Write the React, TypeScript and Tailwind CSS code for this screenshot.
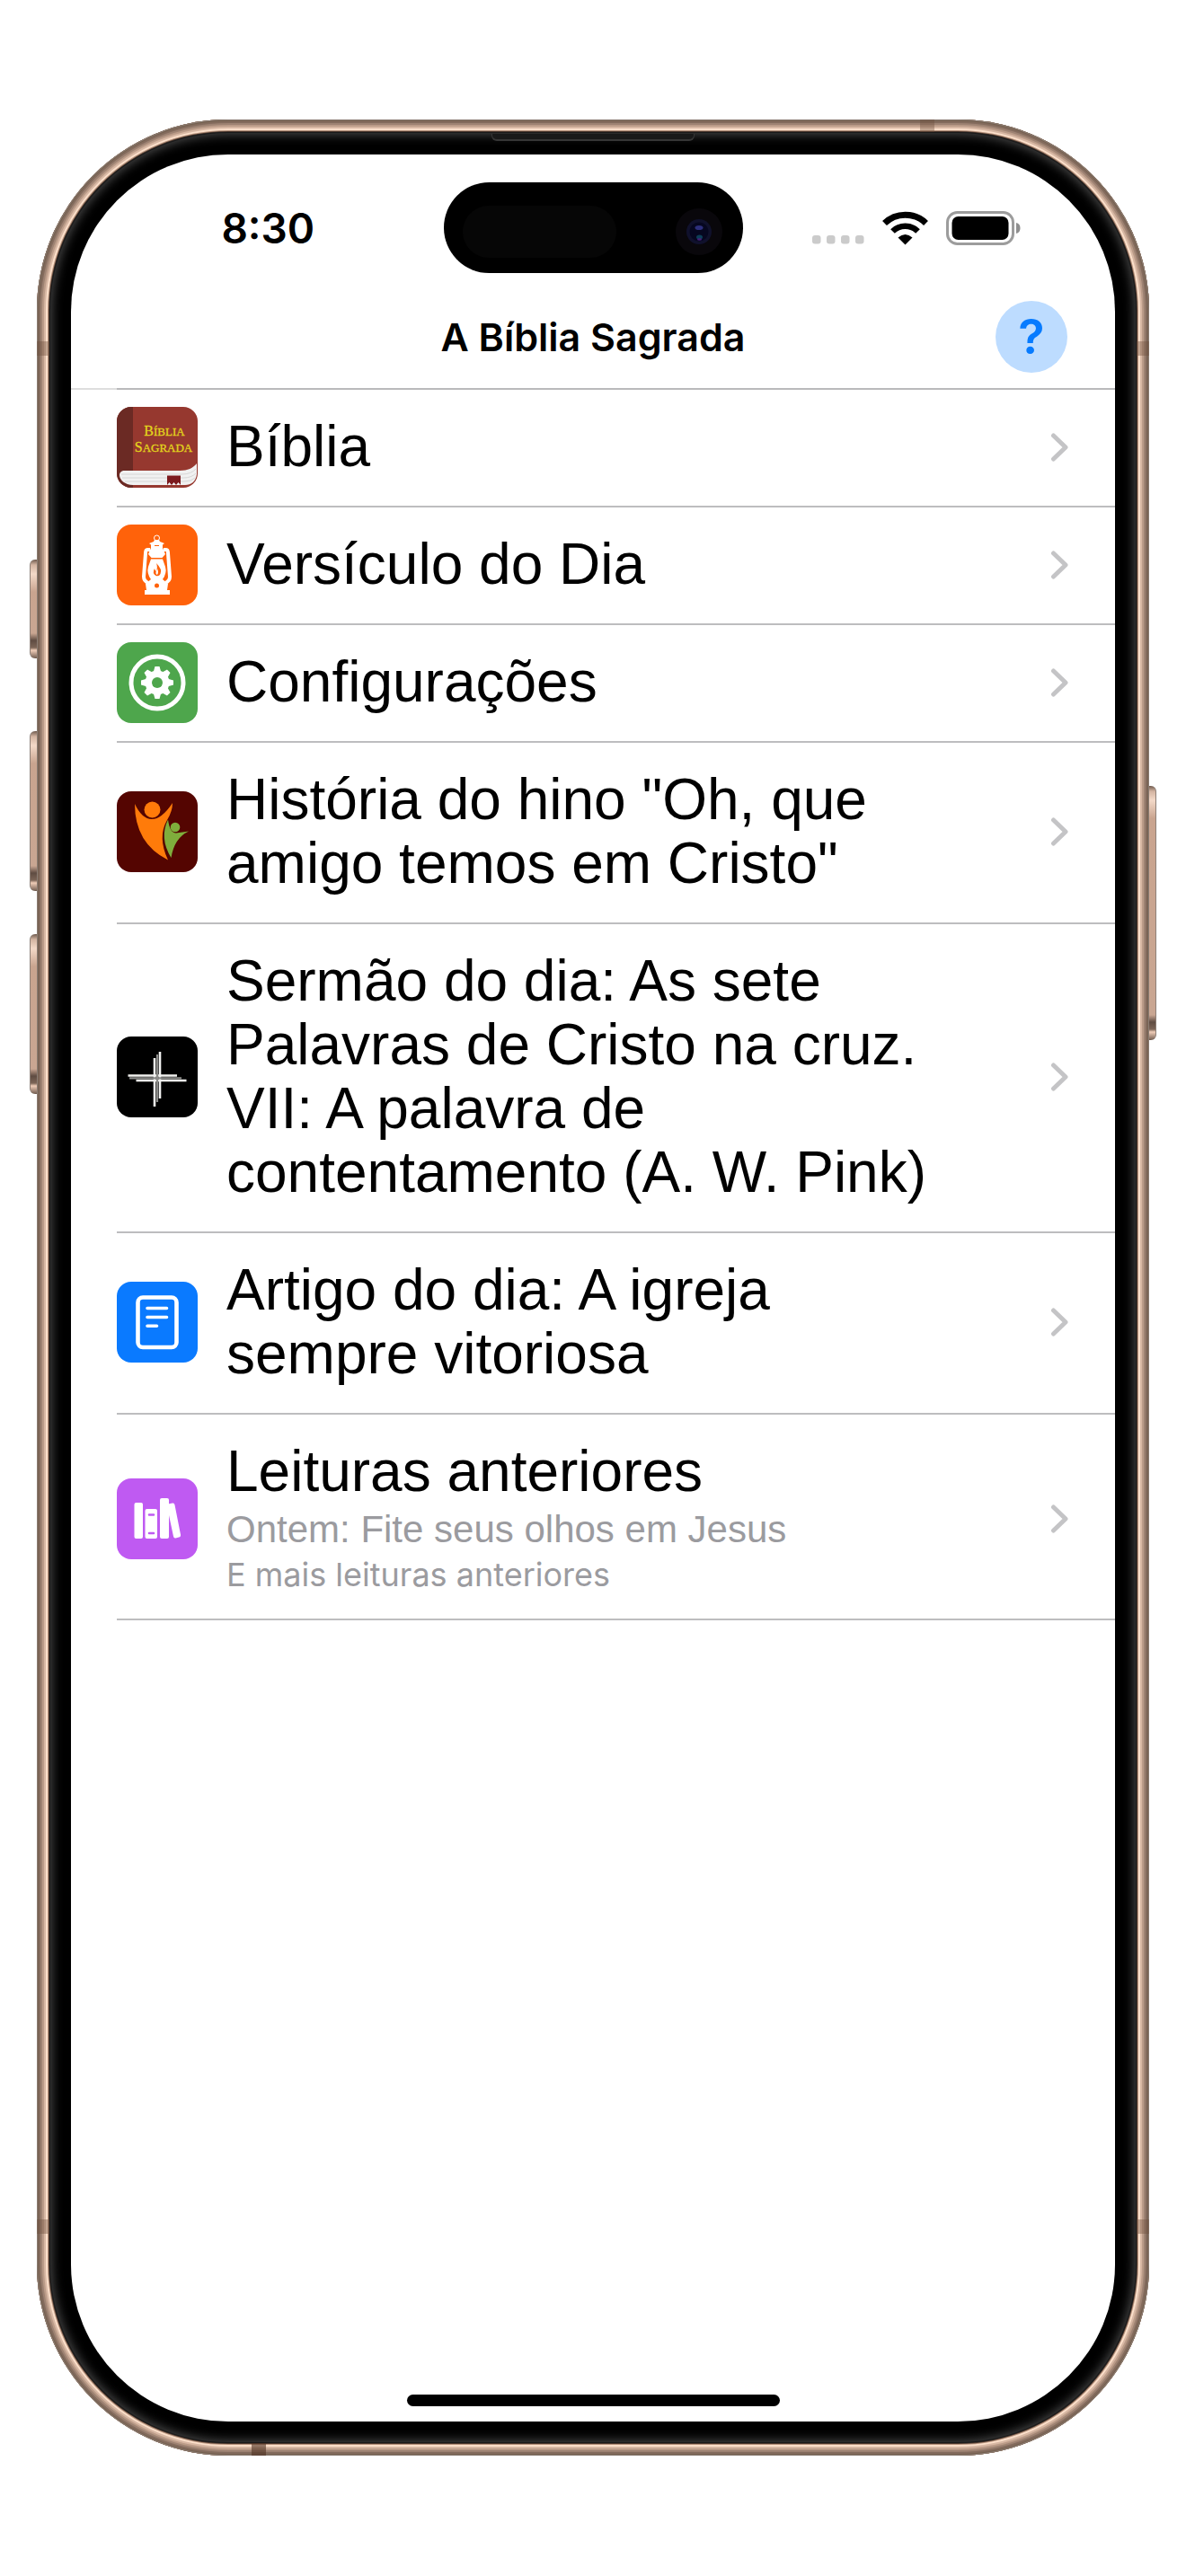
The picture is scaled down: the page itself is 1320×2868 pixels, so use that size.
import type { ReactNode } from "react";

interface IMenuItem {
  title: string;
  icon: ReactNode;
  subtitle?: string;
  note?: string;
}

function BibleIcon() {
  return (
    <svg viewBox="0 0 90 90" className="size-full">
      <rect width="90" height="90" fill="#96382f" />
      <rect width="18" height="90" fill="#6b2a24" />
      <g fill="#e3d51c" stroke="#e3d51c" strokeWidth="0.300" textAnchor="middle" fontFamily="Liberation Serif, serif" fontSize="16">
        <text x="53" y="32">
          B<tspan fontSize="13">ÍBLIA</tspan>
        </text>
        <text x="52" y="50">
          S<tspan fontSize="13">AGRADA</tspan>
        </text>
      </g>
      <path d="M9 71H70C79 71 85 68 89 63V75C88 83 83 87 76 87H18C9 87 3 81 3 76C3 73 5 71 9 71Z" fill="#f1f1f1" />
      <path d="M5 75H72Q83 75 88 69M6 79H74Q83 79 88 74M9 83H75Q83 83 87 79" fill="none" stroke="#d6d6d6" strokeWidth="1" />
      <path d="M56 76.500H71V87L68.500 84L66 87L63.500 84L61 87L58.500 84L56 87Z" fill="#7c1a1e" />
    </svg>
  );
}

function LanternIcon() {
  return (
    <svg viewBox="0 0 90 90" className="size-full">
      <rect width="90" height="90" fill="#ff620a" />
      <circle cx="44.500" cy="15" r="3" fill="none" stroke="#fff" strokeWidth="1" />
      <path d="M42 17H47L48 19L53 21L51 22.500V26L54 33L50.500 37H38.500L35 33L38 26V22.500L36 21L41 19Z" fill="#fff" />
      <path d="M42 23.500H47" stroke="#ff620a" strokeWidth="1" />
      <path d="M37 28H34Q32 28 32 32L30 58Q30 63 35 65M52 28H55Q57 28 57 32L59 58Q59 63 54 65" fill="none" stroke="#fff" strokeWidth="4" />
      <path d="M38 38.500H51L54 47Q56 54 51 61L57 66L56 73H59V78H31V73H33L32 66L38 61Q33 54 35 47Z" fill="#fff" />
      <path d="M44 43Q51 50 48.500 55Q47 58 43.500 57Q39 54 42 49Q42.500 51 43.500 52Q46 48 44 43Z" fill="#ff620a" />
      <path d="M45 49Q47 53 45 56Q42 55 45 49Z" fill="#fff" />
      <circle cx="44.500" cy="68" r="2.500" fill="#ff620a" />
    </svg>
  );
}

function GearIcon() {
  return (
    <svg viewBox="0 0 90 90" className="size-full">
      <rect width="90" height="90" fill="#4ea64c" />
      <circle cx="45" cy="45" r="29" fill="none" stroke="#fff" strokeWidth="5" />
      <g fill="#fff">
        <circle cx="45" cy="45" r="13.500" />
        {[0, 45, 90, 135].map((angle) => (
          <path key={angle} d="M42.500 27H47.500L49.500 34V56L47.500 63H42.500L40.500 56V34Z" transform={`rotate(${angle} 45 45)`} />
        ))}
      </g>
      <circle cx="45" cy="45" r="6" fill="#4ea64c" />
    </svg>
  );
}

function FiguresIcon() {
  return (
    <svg viewBox="0 0 90 90" className="size-full">
      <rect width="90" height="90" fill="#540501" />
      <g fill="#ff7b0a">
        <circle cx="39.500" cy="20.500" r="9" />
        <path d="M20 14Q28 31 39 31Q50 31 62 13Q62 22 56 32Q45 51 57 76.500Q20 58 20 14Z" />
      </g>
      <g fill="#7fae3c">
        <circle cx="65" cy="40" r="5.300" />
        <path d="M57 31.500Q59 46.500 66 46.500L80 44.500Q64 52 60.500 74Q47 52 57 31.500Z" />
      </g>
    </svg>
  );
}

function CrossIcon() {
  return (
    <svg viewBox="0 0 90 90" className="size-full">
      <rect width="90" height="90" fill="#000" />
      <path d="M12.500 43.500H67M21.500 49H77.500M42 24V78M48 17V69" stroke="#f2f2f0" strokeWidth="2.600" />
      <path d="M14 46.300H72M45 20V73" stroke="#8b8b89" strokeWidth="2.200" />
    </svg>
  );
}

function ArticleIcon() {
  return (
    <svg viewBox="0 0 90 90" className="size-full">
      <rect width="90" height="90" fill="#0a7aff" />
      <rect x="23.500" y="17.500" width="43" height="55.500" rx="5.500" fill="none" stroke="#fff" strokeWidth="4.600" />
      <path d="M34 29.500H55.500M34 39.500H55.500M34 49.300H44.500" stroke="#fff" strokeWidth="3.600" strokeLinecap="round" />
    </svg>
  );
}

function BooksIcon() {
  return (
    <svg viewBox="0 0 90 90" className="size-full">
      <rect width="90" height="90" fill="#bf5af2" />
      <g fill="#fff">
        <rect x="19.500" y="27" width="9.500" height="40" rx="2" />
        <rect x="31.500" y="34" width="13.500" height="33" rx="2" />
        <rect x="48" y="22" width="10" height="45" rx="2" />
        <path d="M57 28.500L62 27.500Q64 27 64.500 29.500L71 62.500Q71.500 65 69 65.500L65.500 66.500Q63.500 67 63 64.500L58 41Z" />
      </g>
      <path d="M36 40.500H41M36 61H41" stroke="#bf5af2" strokeWidth="2.600" strokeLinecap="round" />
    </svg>
  );
}

const items: IMenuItem[] = [
  { title: "Bíblia", icon: <BibleIcon /> },
  { title: "Versículo do Dia", icon: <LanternIcon /> },
  { title: "Configurações", icon: <GearIcon /> },
  { title: 'História do hino "Oh, que amigo temos em Cristo"', icon: <FiguresIcon /> },
  {
    title: "Sermão do dia: As sete Palavras de Cristo na cruz. VII: A palavra de contentamento (A. W. Pink)",
    icon: <CrossIcon />,
  },
  { title: "Artigo do dia: A igreja sempre vitoriosa", icon: <ArticleIcon /> },
  {
    title: "Leituras anteriores",
    icon: <BooksIcon />,
    subtitle: "Ontem: Fite seus olhos em Jesus",
    note: "E mais leituras anteriores",
  },
];

function MenuRow(props: { item: IMenuItem }) {
  const { item } = props;
  return (
    <li className="border-b-2 border-[#bdbdbf]">
      <a href="#" className={item.subtitle ? "flex items-center pt-7 pb-6 pr-[52px]" : "flex items-center pt-7 pb-[30px] pr-[52px]"}>
        {/* the icon is taller than one line of text, so it must not stretch the row */}
        <span className="-my-3 mr-8 size-[90px] shrink-0 overflow-hidden rounded-2xl">{item.icon}</span>
        <span className="mr-[124px] flex-1">
          <span className="block text-[64px] leading-[71px] text-black">{item.title}</span>
          {item.subtitle && (
            <span className="mt-1 block text-[42px] leading-[50px] text-[#9b9b9f]">{item.subtitle}</span>
          )}
          {item.note && (
            <span className="block font-['Inter',sans-serif] text-[36px] leading-[50px] text-[#9b9b9f]">{item.note}</span>
          )}
        </span>
        <svg viewBox="0 0 20 32" className="h-8 w-5 shrink-0" fill="none" stroke="#c4c4c6" strokeWidth="5" strokeLinecap="round" strokeLinejoin="round">
          <path d="M3.500 3L17 16L3.500 29" />
        </svg>
      </a>
    </li>
  );
}

function DynamicIsland() {
  return (
    <div className="flex h-[101px] items-center justify-between rounded-full bg-black pt-2 pr-[23px] pl-[21px]">
      <span className="h-[58px] w-[171px] rounded-full bg-[#060606]" />
      <svg viewBox="0 0 52 52" className="size-[52px]">
        <circle cx="26" cy="26" r="26" fill="#09070b" />
        <circle cx="26" cy="26" r="14" fill="#10112c" />
        <circle cx="26" cy="26" r="10.500" fill="#060720" />
        <ellipse cx="26" cy="21.500" rx="4.500" ry="2.500" fill="#2d2f7c" />
        <ellipse cx="26.500" cy="32" rx="3.500" ry="2.500" fill="#0d3f58" />
        <ellipse cx="26.500" cy="34.500" rx="2.500" ry="1.200" fill="#4a1f7a" />
      </svg>
    </div>
  );
}

function StatusBar() {
  return (
    <div className="grid h-[163px] grid-cols-[1fr_333px_1fr] items-center">
      <span className="pl-6 text-center font-['Inter',sans-serif] text-[46px] leading-[56px] font-semibold text-black">8:30</span>
      <DynamicIsland />
      <div className="flex items-center justify-end pr-[104px]">
        <svg viewBox="0 0 58 38" className="mr-5 h-[38px] w-[58px]" fill="#cbcbcb">
          {[0, 16, 32, 48].map((x) => (
            <rect key={x} x={x} y="27" width="9.500" height="9.500" rx="3" />
          ))}
        </svg>
        <svg viewBox="0 0 51 38" className="mr-5 h-[38px] w-[51px]" fill="none" stroke="#000">
          <path d="M2.500 13.500A33 33 0 0 1 48.500 13.500" strokeWidth="7" />
          <path d="M11.500 22.500A20 20 0 0 1 39.500 22.500" strokeWidth="6.600" />
          <path d="M25.500 37.500L17.500 29.500Q25.500 22.500 33.500 29.500Z" fill="#000" stroke="none" />
        </svg>
        <svg viewBox="0 0 84 38" className="h-[38px] w-[84px]">
          <rect x="1.500" y="1.500" width="73" height="35" rx="11" fill="none" stroke="#9c9c9c" strokeWidth="3" />
          <rect x="6.500" y="6" width="63" height="26" rx="7" fill="#000" />
          <path d="M78 13Q82.500 14 82.500 19Q82.500 24 78 25Z" fill="#8e8e8e" />
        </svg>
      </div>
    </div>
  );
}

function NavBar() {
  return (
    <header>
      <div className="grid grid-cols-[80px_1fr_80px] items-center px-[53px] pb-[17px]">
        <h1 className="col-start-2 text-center font-['Inter',sans-serif] text-[43px] leading-[52px] font-semibold text-black">
          A Bíblia Sagrada
        </h1>
        <button
          type="button"
          aria-label="Ajuda"
          className="flex size-20 items-center justify-center rounded-full bg-[#bddcff] font-['Inter',sans-serif] text-[54px] leading-[60px] font-semibold text-[#077bff]"
        >
          ?
        </button>
      </div>
      <div className="flex">
        <div className="w-[51px] border-b-2 border-[#dedede]" />
        <div className="flex-1 border-b-2 border-[#b9b9bb]" />
      </div>
    </header>
  );
}

const sideButton =
  "absolute rounded-l-md border-l border-[#8d8078] bg-[linear-gradient(to_bottom,#6f5a4e_0,#d3b4a1_6px,#f3d9c8_16px,#c9a48f_36px,#c9a692_calc(100%-28px),#5f4c42_calc(100%-20px),#7c6557_calc(100%-12px),#f0cdb8_calc(100%-9px),#6f5a4e_100%)] w-2";

function App() {
  return (
    <div className="flex min-h-screen flex-col bg-white px-[41px] pt-[133px] pb-[134px] font-['Liberation_Sans',Arial,sans-serif]">
      <div className="relative flex flex-1 flex-col rounded-[213px] bg-[#4a372d] p-[14px] shadow-[inset_0_0_0_1px_#8d7e75,inset_0_0_0_2px_#74604f,inset_0_0_0_4px_#836b5d,inset_0_0_0_6px_#9d8272,inset_0_0_0_8px_#ba9b88,inset_0_0_0_10px_#d8b8a4,inset_0_0_0_12px_#fbdfca,inset_0_0_0_13px_#b8947e]">
        {/* hardware buttons */}
        <span className={`${sideButton} top-[490px] -left-2 h-[110px]`} />
        <span className={`${sideButton} top-[681px] -left-2 h-[178px]`} />
        <span className={`${sideButton} top-[907px] -left-2 h-[178px]`} />
        <span className={`${sideButton} top-[742px] -right-2 h-[283px] -scale-x-100`} />

        {/* antenna bands */}
        <span className="absolute top-[247px] left-0 h-4 w-[14px] bg-[#6f4e3d]/40" />
        <span className="absolute top-[247px] right-0 h-4 w-[14px] bg-[#6f4e3d]/40" />
        <span className="absolute bottom-[247px] left-0 h-4 w-[14px] bg-[#6f4e3d]/40" />
        <span className="absolute right-0 bottom-[247px] h-4 w-[14px] bg-[#6f4e3d]/40" />
        <span className="absolute top-0 right-[239px] h-[14px] w-4 bg-[#6f4e3d]/40" />
        <span className="absolute bottom-0 left-[239px] h-[14px] w-4 bg-[#4f3021]/60" />

        <div className="relative flex flex-1 flex-col rounded-[199px] bg-black px-6 pt-[25px] pb-6 shadow-[inset_0_0_0_1px_#1a1a1a,inset_0_0_12px_3px_#484848]">
          {/* earpiece */}
          <div className="absolute inset-x-0 top-[2px] flex justify-center">
            <span className="h-2 w-[226px] rounded-b-md border-x border-b-2 border-[#363636] bg-[#191919]" />
          </div>
          <div className="flex flex-1 flex-col overflow-hidden rounded-[175px] bg-white">
            <StatusBar />
            <NavBar />
            <ul className="ml-[51px]">
              {items.map((item) => (
                <MenuRow key={item.title} item={item} />
              ))}
            </ul>
            <div className="mt-auto flex justify-center pb-[17px]">
              <span className="h-[13px] w-[415px] rounded-full bg-black" />
            </div>
          </div>
        </div>
      </div>
    </div>
  );
}

export default App;
